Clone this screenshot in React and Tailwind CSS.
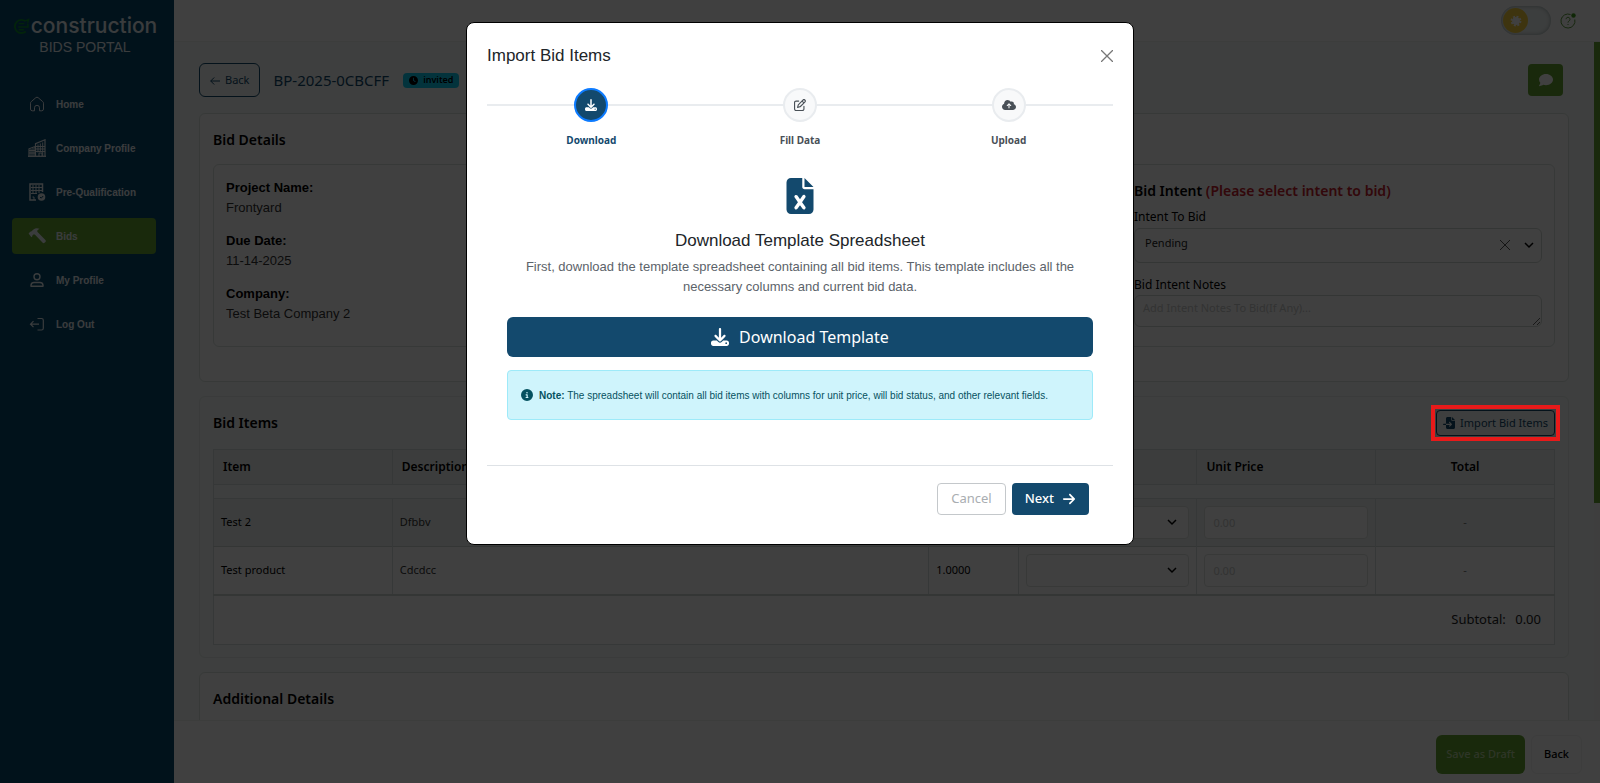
import React from 'react'
import {
  FaDownload,
  FaRegPenToSquare,
  FaCloudArrowUp,
  FaFileExcel,
  FaCircleInfo,
  FaArrowRight,
  FaFileImport,
  FaComment,
  FaClock,
} from 'react-icons/fa6'

function HomeIcon() {
  return (
    <svg viewBox="0 0 16 16" className="h-4 w-4" fill="none" stroke="currentColor" strokeLinejoin="round">
      <path d="M1.500 7.200a2 2 0 0 1 .8-1.600l4.500-3.900a1.800 1.800 0 0 1 2.400 0l4.500 3.900a2 2 0 0 1 .8 1.600V13a1.800 1.800 0 0 1-1.800 1.800h-2.200v-3a2.500 2.500 0 0 0-5 0v3H3.300A1.800 1.800 0 0 1 1.500 13z" />
    </svg>
  )
}

function CompanyIcon() {
  return (
    <svg viewBox="0 0 18 18" className="h-[18px] w-[18px]" fill="none" stroke="currentColor">
      <path d="M1 17V9.800L7 7.500V17M7.500 17V4.600L17 .8V17" strokeWidth="1.200" />
      <path d="M0 17.300h18" strokeWidth="1.300" />
      <path d="M10 5.500v8M12.300 4.500v8.500M14.700 3.500V17M8 7.500h9M8 10h9M8 12.500h9M3 10v7M5 9v8M1 11.500h6M1 14h6M11 17v-3h3v3" />
    </svg>
  )
}

function QualificationIcon() {
  return (
    <svg viewBox="0 0 18 18" className="h-[18px] w-[18px]" fill="none" stroke="currentColor">
      <path d="M8 17H2V1h12.500v8" strokeWidth="1.500" />
      <path d="M5 2v8.500M8 2v8.500M11 2v8M3 4.500h11M3 7.500h11M3 10.500h6M6 17v-3H4.500" />
      <circle cx="13.500" cy="14" r="3.800" fill="currentColor" stroke="none" />
      <path d="m12 14 1.200 1.200 2-2.200" stroke="#04486e" />
    </svg>
  )
}

function HammerIcon() {
  return (
    <svg viewBox="0 0 18 18" className="h-[18px] w-[18px]" fill="currentColor">
      <path d="M.6 6.400 2.200 4.700l1-.1 2.600-2.400C7.500.8 9.800.9 11.500 1.800L9.400 3.300l-.1 1.500 8.100 8.300a1.300 1.300 0 0 1 0 1.800l-.9.900a1.300 1.300 0 0 1-1.800 0L6.800 7.400l-1.500.2-.9.900-.2 1-.8.700z" />
    </svg>
  )
}

function ProfileIcon() {
  return (
    <svg viewBox="0 0 16 16" className="h-4 w-4" fill="none" stroke="currentColor" strokeWidth="1.400">
      <circle cx="8" cy="4.800" r="3" />
      <path d="M2 14.300v-1.200a3 3 0 0 1 3-2.600h6a3 3 0 0 1 3 2.600v1.200z" strokeLinejoin="round" />
    </svg>
  )
}

function LogOutIcon() {
  return (
    <svg viewBox="0 0 16 16" className="h-4 w-4" fill="none" stroke="currentColor" strokeWidth="1.200">
      <path d="M8.500 2.500h4a1.800 1.800 0 0 1 1.800 1.800v7.900a1.800 1.800 0 0 1-1.800 1.800h-4" />
      <path d="M10 8.200H1.500M4.500 5.200l-3 3 3 3" />
    </svg>
  )
}

const menu = [
  { name: 'Home', icon: <HomeIcon /> },
  { name: 'Company Profile', icon: <CompanyIcon /> },
  { name: 'Pre-Qualification', icon: <QualificationIcon /> },
  { name: 'Bids', icon: <HammerIcon />, active: true },
  { name: 'My Profile', icon: <ProfileIcon /> },
  { name: 'Log Out', icon: <LogOutIcon /> },
]

const details = [
  { label: 'Project Name:', value: 'Frontyard' },
  { label: 'Due Date:', value: '11-14-2025' },
  { label: 'Company:', value: 'Test Beta Company 2' },
]

const items = [
  { id: 1, name: 'Test 2', description: 'Dfbbv', quantity: '1.0000' },
  { id: 2, name: 'Test product', description: 'Cdcdcc', quantity: '1.0000' },
]

const steps = [
  { name: 'Download', icon: <FaDownload />, active: true },
  { name: 'Fill Data', icon: <FaRegPenToSquare /> },
  { name: 'Upload', icon: <FaCloudArrowUp className="h-[14px] w-[14px]" /> },
]

function Chevron() {
  return (
    <svg viewBox="0 0 10 10" className="h-[10px] w-[10px]" fill="none" stroke="currentColor" strokeWidth="1.500">
      <path d="m1 3 4 4 4-4" />
    </svg>
  )
}

function Sidebar() {
  return (
    <aside className="w-[174px] shrink-0 bg-[#04486e] pt-4 font-['Liberation_Sans'] text-[#e8eef2]">
      <div className="flex items-center justify-center gap-px pr-1">
        <svg viewBox="0 0 18 18" className="h-[18px] w-[17px]" fill="none" stroke="#0a8a2c" strokeWidth="2">
          <path d="M13.300 4A7 7 0 1 0 13.500 14.800" />
          <path d="M15.300 6.500a7 7 0 0 1 .6 3.500H5.500M6 6.500h6M6 13h5.500M13 3.500l3.500-1.500-1 3.500" strokeWidth="1.500" />
        </svg>
        <span className="font-['Inter'] text-[21px] font-medium leading-5">construction</span>
      </div>
      <p className="pr-1 pt-px text-center text-sm leading-5">BIDS PORTAL</p>
      <nav className="mt-[29px] flex flex-col gap-2 pl-3 pr-[18px]">
        {menu.map((item) => (
          <a
            key={item.name}
            href="#"
            className={
              'flex h-9 items-center gap-[10px] rounded pl-4 text-[10px] font-bold ' +
              (item.active ? 'bg-[#64a430]' : '')
            }
          >
            <span className="flex w-[18px] justify-center">{item.icon}</span>
            {item.name}
          </a>
        ))}
      </nav>
    </aside>
  )
}

function BidDetails() {
  return (
    <section className="rounded-md border border-[#dbe3e0] bg-white px-[13px] pb-[34px] pt-4">
      <h2 className="text-sm font-semibold leading-5">Bid Details</h2>
      <div className="mt-[14px] flex justify-between rounded-md border border-[#dbe3e0] px-3">
        <dl className="flex flex-col gap-[13px] pb-[22px] pt-[13px] font-['Liberation_Sans'] text-[13px] leading-5">
          {details.map((d) => (
            <div key={d.label}>
              <dt className="font-bold">{d.label}</dt>
              <dd className="text-[#333]">{d.value}</dd>
            </div>
          ))}
        </dl>
        <div className="w-[408px] pt-4 text-xs">
          <h3 className="text-sm font-semibold leading-5">
            Bid Intent <span className="text-[#c8202c]">(Please select intent to bid)</span>
          </h3>
          <label htmlFor="intent" className="mt-2 block leading-4">
            Intent To Bid
          </label>
          <div className="relative mt-[3px]">
            <select
              id="intent"
              className="h-[35px] w-full appearance-none rounded-md border border-[#d0d8d4] px-[10px] pb-1 text-[11px] text-[#222]"
            >
              <option>Pending</option>
            </select>
            <span className="pointer-events-none absolute right-2 top-3 flex items-center gap-[14px]">
              <svg viewBox="0 0 10 10" className="h-[10px] w-[10px]" stroke="#555">
                <path d="m0 0 10 10M10 0 0 10" />
              </svg>
              <Chevron />
            </span>
          </div>
          <label htmlFor="notes" className="mt-[14px] block leading-4">
            Bid Intent Notes
          </label>
          <textarea
            id="notes"
            placeholder="Add Intent Notes To Bid(If Any)..."
            className="mt-[2px] block h-8 w-full rounded-md border border-[#d0d8d4] px-2 py-[5px] text-[11px] placeholder:text-[#c8cac9]"
          />
        </div>
      </div>
    </section>
  )
}

function BidItems() {
  return (
    <section className="rounded-md border border-[#e6ecea] px-[13px] pb-3 pt-[13px]">
      <div className="flex items-center justify-between">
        <h2 className="text-sm font-semibold">Bid Items</h2>
        <div className="relative">
          <button className="flex h-[26px] items-center gap-[5px] rounded-sm border border-[#13496d] px-[6px] text-[11px] text-[#13496d]">
            <FaFileImport className="h-3 w-3" />
            Import Bid Items
          </button>
          <span className="pointer-events-none absolute -inset-[5px] z-50 border-4 border-[#e81a1a]" />
        </div>
      </div>
      <table className="mt-[13px] w-full table-fixed border-collapse border border-[#d8e0dd] text-[11px]">
        <colgroup>
          <col className="w-[13.333%]" />
          <col className="w-[40%]" />
          <col className="w-[6.667%]" />
          <col className="w-[13.333%]" />
          <col className="w-[13.333%]" />
          <col className="w-[13.333%]" />
        </colgroup>
        <thead>
          <tr className="h-[35px] border-b border-[#d8e0dd] bg-[#f0f4f2] text-left text-xs">
            <th className="border-r border-[#d8e0dd] px-[9px] font-semibold">Item</th>
            <th className="border-r border-[#d8e0dd] px-[9px] font-semibold">Description</th>
            <th className="border-r border-[#d8e0dd] px-[9px] font-semibold">Qty</th>
            <th className="border-r border-[#d8e0dd] px-[9px] font-semibold">Will Bid</th>
            <th className="border-r border-[#d8e0dd] px-[9px] font-semibold">Unit Price</th>
            <th className="px-2 text-center font-semibold">Total</th>
          </tr>
        </thead>
        <tbody className="border-b-2 border-[#cdd6d2]">
          <tr className="h-[14px] border-b border-[#d8e0dd]">
            <td colSpan={6} />
          </tr>
          {items.map((item) => (
            <tr key={item.id} className="h-12 border-b border-[#cdd6d2] odd:bg-white even:bg-[#eff3f1]">
              <td className="border-r border-[#d8e0dd] px-[7px]">{item.name}</td>
              <td className="border-r border-[#d8e0dd] px-[7px] text-[#333]">{item.description}</td>
              <td className="border-r border-[#d8e0dd] px-[7px]">{item.quantity}</td>
              <td className="border-r border-[#d8e0dd] px-[7px]">
                <div className="relative">
                  <select
                    aria-label="Will bid"
                    className="block h-[33px] w-full appearance-none rounded border border-[#dde3e0] bg-white px-2"
                  />
                  <span className="pointer-events-none absolute right-3 top-[11px]">
                    <Chevron />
                  </span>
                </div>
              </td>
              <td className="border-r border-[#d8e0dd] px-[7px]">
                <input
                  aria-label="Unit price"
                  placeholder="0.00"
                  className="block h-[33px] w-full rounded border border-[#dde3e0] bg-white px-2 placeholder:text-[#c8cac9]"
                />
              </td>
              <td className="text-center text-[#777]">-</td>
            </tr>
          ))}
        </tbody>
        <tfoot>
          <tr className="h-[50px] bg-white">
            <td colSpan={6} className="px-[13px] text-right text-[13px] text-[#222]">
              Subtotal: <span className="ml-[6px]">0.00</span>
            </td>
          </tr>
        </tfoot>
      </table>
    </section>
  )
}

function ImportModal() {
  return (
    <div className="fixed inset-0 z-40 flex items-start justify-center bg-black/75 pt-[22px]">
      <div
        role="dialog"
        aria-label="Import Bid Items"
        className="w-[668px] rounded-lg border border-black bg-white px-5 pb-[29px] pt-[21px] font-['Liberation_Sans']"
      >
        <div className="flex items-center justify-between">
          <h1 className="text-[17px] leading-6 text-[#212529]">Import Bid Items</h1>
          <button aria-label="Close" className="text-[#777]">
            <svg viewBox="0 0 12 12" className="h-3 w-3" stroke="currentColor" strokeWidth="1.300">
              <path d="m0 0 12 12M12 0 0 12" />
            </svg>
          </button>
        </div>
        <ol className="relative mt-5 grid grid-cols-3 font-['Noto_Sans'] before:absolute before:inset-x-0 before:top-4 before:h-[2px] before:bg-[#e9ecef]">
          {steps.map((step) => (
            <li key={step.name} className="relative flex flex-col items-center gap-[10px]">
              <span
                className={
                  'flex h-[34px] w-[34px] items-center justify-center rounded-full border-2 text-xs ' +
                  (step.active
                    ? 'border-[#0d7bff] bg-[#13496d] text-white'
                    : 'border-[#e9ecef] bg-[#f8f9fa] text-[#495057]')
                }
              >
                {step.icon}
              </span>
              <span
                className={
                  'text-[10px] font-bold leading-4 ' + (step.active ? 'text-[#13496d]' : 'text-[#495057]')
                }
              >
                {step.name}
              </span>
            </li>
          ))}
        </ol>
        <div className="mt-[30px] px-5 text-center">
          <FaFileExcel className="mx-auto h-9 w-7 text-[#13496d]" />
          <h2 className="mt-[15px] text-[17px] leading-6 text-[#212529]">Download Template Spreadsheet</h2>
          <p className="mt-1 text-[13px] leading-5 text-[#5c636a]">
            First, download the template spreadsheet containing all bid items. This template includes all the
            necessary columns and current bid data.
          </p>
          <button className="mt-5 flex h-10 w-full items-center justify-center gap-[10px] rounded-md bg-[#13496d] font-['Noto_Sans'] text-base text-white">
            <FaDownload className="h-[18px] w-[18px]" />
            Download Template
          </button>
          <div className="mt-[13px] flex h-[50px] items-center gap-[6px] rounded border border-[#9eeaf9] bg-[#cff4fc] px-[13px] text-[10px] text-[#055160]">
            <FaCircleInfo className="h-3 w-3" />
            <p>
              <strong>Note:</strong> The spreadsheet will contain all bid items with columns for unit price, will bid
              status, and other relevant fields.
            </p>
          </div>
        </div>
        <div className="mt-[45px] flex justify-end gap-[6px] border-t border-[#dee2e6] pr-6 pt-[17px] font-['Noto_Sans'] text-[13px]">
          <button className="h-8 rounded border border-[#c4c8cb] px-[13px] text-[#a9adb1]">Cancel</button>
          <button className="flex h-8 items-center gap-2 rounded bg-[#13496d] px-[13px] font-medium text-white">
            Next
            <FaArrowRight className="h-[14px] w-[14px]" />
          </button>
        </div>
      </div>
    </div>
  )
}

function App() {
  return (
    <div className="flex h-screen overflow-hidden bg-[#f5fbf9] font-['Noto_Sans'] text-black">
      <Sidebar />
      <div className="flex min-w-0 flex-1 flex-col">
        <header className="flex h-[42px] shrink-0 items-center justify-end gap-[9px] border-b border-[#eef2f0] bg-white pr-6">
          <button
            role="switch"
            aria-checked="false"
            aria-label="Dark mode"
            className="h-[29px] w-[50px] rounded-full bg-[#f0f6f6] pl-[2px] shadow-[inset_0_0_4px_#9aa8a8]"
          >
            <span className="flex h-[25px] w-[25px] items-center justify-center rounded-full bg-[#f8d03c]">
              <svg viewBox="0 0 12 12" className="h-3 w-3" fill="#fff" stroke="#fff">
                <circle cx="6" cy="6" r="3.500" />
                <circle cx="6" cy="6" r="4.500" fill="none" strokeWidth="1.800" strokeDasharray="2 1.530" />
              </svg>
            </span>
          </button>
          <button aria-label="Help">
            <svg viewBox="0 0 16 16" className="h-4 w-4" fill="none" stroke="#5a9a3a">
              <path d="M10.500 1.500A7 7 0 1 0 14.800 6.500" />
              <path d="M6 6.200a2 2 0 1 1 3 1.800c-.7.400-1 .8-1 1.600M8 11v1" />
              <circle cx="13.500" cy="2.500" r="2.200" fill="#3f9a1c" stroke="none" />
            </svg>
          </button>
        </header>
        <div className="flex min-h-0 flex-1">
          <main className="flex min-w-0 flex-1 flex-col gap-[14px] overflow-hidden pl-[25px] pr-[25px] pt-[21px]">
            <div className="mb-[2px] flex shrink-0 items-center">
              <button className="flex h-[34px] items-center gap-[5px] rounded-md border border-[#13496d] px-[10px] pt-px text-[11px] text-[#13496d]">
                <svg viewBox="0 0 10 10" className="h-[10px] w-[10px]" fill="none" stroke="currentColor">
                  <path d="M10 5H.7M4.200 1.500.7 5l3.500 3.500" />
                </svg>
                Back
              </button>
              <span className="ml-[13px] text-[15px] text-[#13496d]">BP-2025-0CBCFF</span>
              <span className="ml-[14px] flex h-[15px] items-center gap-[5px] rounded-sm bg-[#0dcaf0] px-[6px] text-[9px] font-semibold">
                <FaClock />
                invited
              </span>
              <button
                aria-label="Comments"
                className="ml-auto mr-[6px] flex h-8 w-[35px] items-center justify-center rounded bg-[#64a430] text-white"
              >
                <FaComment className="h-[14px] w-[14px]" />
              </button>
            </div>
            <BidDetails />
            <BidItems />
            <section className="h-[120px] shrink-0 rounded-md border border-[#dbe3e0] bg-white px-[13px] pt-4">
              <h2 className="text-sm font-semibold leading-5">Additional Details</h2>
            </section>
          </main>
          <div className="w-[6px] shrink-0 bg-[#f5f5f5]">
            <div className="h-[68%] bg-[#64a430]" />
          </div>
        </div>
        <footer className="flex h-[63px] shrink-0 items-center justify-end gap-[6px] border-t border-[#eef2f0] bg-white pr-[18px] pt-1 text-[11px] font-medium">
          <button className="h-[39px] rounded-md bg-[#64a430] px-[10px] text-[#b9d39f]">Save as Draft</button>
          <button className="h-[39px] rounded-md border border-[#f2f4f3] px-3">Back</button>
        </footer>
      </div>
      <ImportModal />
    </div>
  )
}

export default App
